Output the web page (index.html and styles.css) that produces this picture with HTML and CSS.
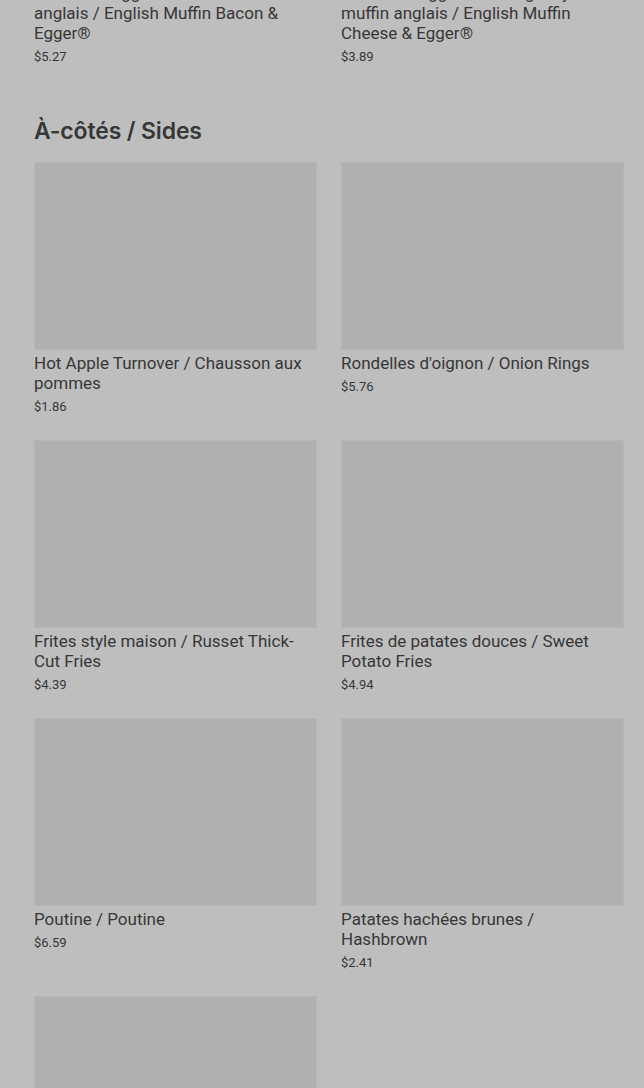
FILE: index.html
```html
<!DOCTYPE html>
<html lang="fr">
<head>
<meta charset="utf-8">
<title>Menu</title>
<link rel="stylesheet" href="styles.css">
</head>
<body>
<main class="page">
  <section class="section section-prev">
    <div class="grid">
      <div class="card">
        <div class="title">Sandwich Egger® bacon sur muffin anglais / English Muffin Bacon &amp; Egger®</div>
        <div class="price">$5.27</div>
      </div>
      <div class="card">
        <div class="title">Sandwich Egger® fromage style sur muffin anglais / English Muffin Cheese &amp; Egger®</div>
        <div class="price">$3.89</div>
      </div>
    </div>
  </section>

  <section class="section">
    <h2 class="heading">À-côtés / Sides</h2>
    <div class="grid">
      <div class="card">
        <div class="thumb"></div>
        <div class="title">Hot Apple Turnover / Chausson aux pommes</div>
        <div class="price">$1.86</div>
      </div>
      <div class="card">
        <div class="thumb"></div>
        <div class="title">Rondelles d'oignon / Onion Rings</div>
        <div class="price">$5.76</div>
      </div>
      <div class="card">
        <div class="thumb"></div>
        <div class="title">Frites style maison / Russet Thick-Cut Fries</div>
        <div class="price">$4.39</div>
      </div>
      <div class="card">
        <div class="thumb"></div>
        <div class="title">Frites de patates douces / Sweet Potato Fries</div>
        <div class="price">$4.94</div>
      </div>
      <div class="card">
        <div class="thumb"></div>
        <div class="title">Poutine / Poutine</div>
        <div class="price">$6.59</div>
      </div>
      <div class="card">
        <div class="thumb"></div>
        <div class="title">Patates hachées brunes / Hashbrown</div>
        <div class="price">$2.41</div>
      </div>
      <div class="card">
        <div class="thumb"></div>
        <div class="title">Galette de pommes de terre / Potato Wedges</div>
        <div class="price">$3.49</div>
      </div>
    </div>
  </section>
</main>
</body>
</html>
```

FILE: styles.css
```css
html, body {
  margin: 0;
  padding: 0;
  background: #bebebe;
}
body {
  font-family: Roboto, "Liberation Sans", sans-serif;
  color: #373737;
  overflow: hidden;
  height: 1088px;
}
.page {
  padding: 0 20px 0 34px;
}
.section-prev {
  margin-top: -20px;
}
.grid {
  display: grid;
  grid-template-columns: 1fr 1fr;
  column-gap: 24px;
  row-gap: 24px;
}
.card {
  display: flex;
  flex-direction: column;
}
.thumb {
  height: 188px;
  background: #b0b0b0;
  box-shadow: inset 0 0 0 1px #b6b6b6;
}
.title {
  margin-top: 3px;
  font-size: 17px;
  font-weight: 400;
  line-height: 20px;
}
.price {
  margin-top: 4px;
  font-size: 13px;
  line-height: 19px;
}
.heading {
  margin: 51px 0 17px;
  font-family: Inter, "Open Sans", sans-serif;
  font-size: 23px;
  font-weight: 600;
  line-height: 28px;
  letter-spacing: -0.15px;
}
```
